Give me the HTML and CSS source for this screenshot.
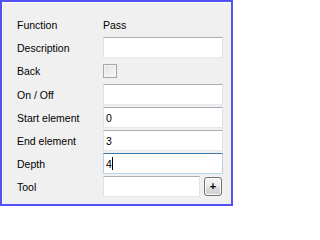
FILE: index.html
```html
<!DOCTYPE html>
<html>
<head>
<meta charset="utf-8">
<link rel="stylesheet" href="styles.css">
</head>
<body>
<div class="panel">
  <div class="form">
    <div class="row r1"><span class="label">Function</span><span class="value">Pass</span></div>
    <div class="row"><span class="label">Description</span><div class="box"></div></div>
    <div class="row r3"><span class="label">Back</span><div class="check"></div></div>
    <div class="row"><span class="label">On / Off</span><div class="box"></div></div>
    <div class="row"><span class="label">Start element</span><div class="box">0</div></div>
    <div class="row"><span class="label">End element</span><div class="box">3</div></div>
    <div class="row"><span class="label">Depth</span><div class="box focus">4<span class="caret"></span></div></div>
    <div class="row"><span class="label">Tool</span><div class="tool"><div class="box short"></div><div class="btn">+</div></div></div>
  </div>
</div>
</body>
</html>
```
FILE: styles.css
```css
html, body {
  margin: 0;
  padding: 0;
}
body {
  width: 233px;
  height: 206px;
  overflow: hidden;
  font-family: "Liberation Sans", Arial, sans-serif;
  font-size: 10.5px;
  color: #000;
}
.panel {
  box-sizing: border-box;
  width: 233px;
  height: 206px;
  border: 2px solid #5252f7;
  background: #f0f0f0;
  box-shadow: inset 1px 1px 0 #fcfcfc;
}
.form {
  padding: 11px 0 0 15px;
  display: flex;
  flex-direction: column;
}
.row {
  height: 23px;
  display: flex;
  align-items: center;
}
.r3 {
  height: 24px;
}
.label {
  width: 86px;
  flex: none;
}
.value {
  padding-left: 0;
}
.box {
  box-sizing: border-box;
  width: 120px;
  height: 21px;
  background: #fff;
  border: 1px solid #dfe2e8;
  border-top-color: #abadb3;
  border-bottom-color: #e3e9ef;
  padding-left: 2px;
  display: flex;
  align-items: center;
}
.box.focus {
  border-color: #b5cfe7;
  border-top-color: #3d7bad;
  border-bottom-color: #b7d9ed;
}
.caret {
  display: inline-block;
  width: 1px;
  height: 13px;
  background: #000;
  margin-left: 0;
}
.check {
  box-sizing: border-box;
  width: 14px;
  height: 14px;
  border: 1px solid #a8a8a8;
  background: linear-gradient(135deg, #e2e2e2, #f8f8f8);
  box-shadow: inset 0 0 0 1px #f4f4f4;
}
.tool {
  display: flex;
  align-items: center;
  gap: 4px;
}
.box.short {
  width: 97px;
}
.btn {
  box-sizing: border-box;
  width: 18px;
  height: 19px;
  border: 1px solid #707070;
  border-radius: 3px;
  background: linear-gradient(#f2f2f2 0%, #ebebeb 50%, #dddddd 51%, #cfcfcf 100%);
  box-shadow: inset 0 0 0 1px #fcfcfc;
  font-weight: bold;
  font-size: 11px;
  display: flex;
  align-items: center;
  justify-content: center;
  line-height: 1;
}
```
